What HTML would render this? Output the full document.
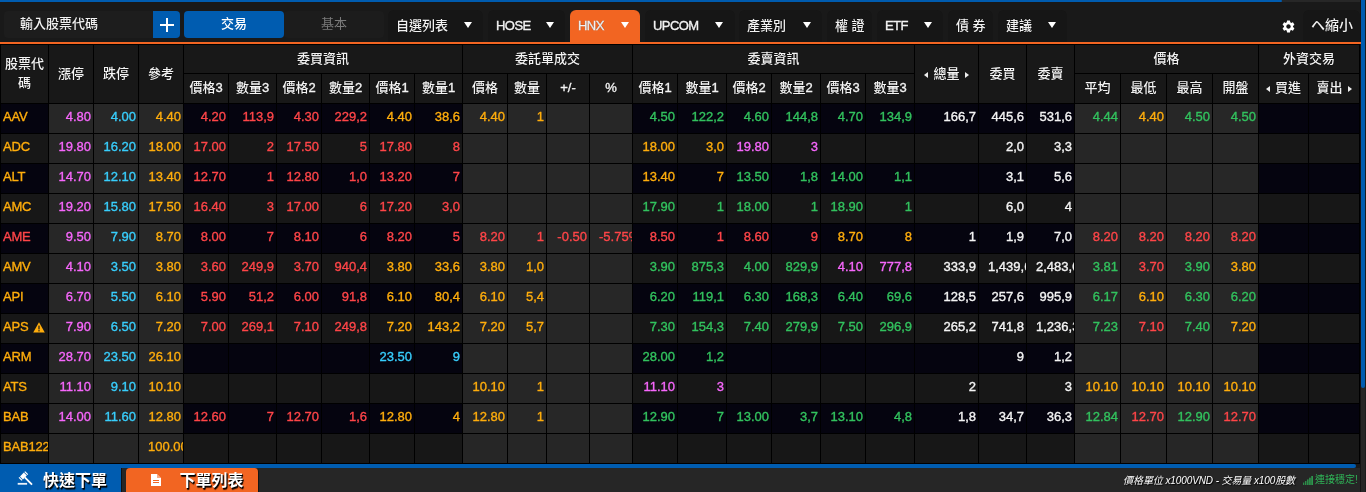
<!DOCTYPE html>
<html lang="zh-Hant"><head><meta charset="utf-8"><title>Price board</title>
<style>
*{box-sizing:border-box}
html,body{margin:0;padding:0}
body{will-change:transform;width:1366px;height:492px;overflow:hidden;background:#191919;position:relative;
 font-family:"Liberation Sans","Noto Sans CJK TC",sans-serif;font-size:13px;color:#f2f2f2}
.abs{position:absolute}
.hs{left:0;top:0;width:1360px;height:2px;background:#272727}
.hs i{display:block;width:1282px;height:2px;background:#005cb0;border-radius:0 1px 1px 0}
.vs{left:1360px;top:0;width:6px;height:492px;background:#262626;border-left:1px solid #141414}
.vs i{position:absolute;left:0;top:0;width:4px;height:388px;background:#005cb0;border-radius:0 0 2px 2px}
.vs b{position:absolute;right:0;top:0;width:1px;height:492px;background:#1c1c1c}
.oline{left:0;top:42px;width:1361px;height:2px;background:#f26522;z-index:3}
.inp{left:4px;top:11px;width:149px;height:27px;background:#1d1d1d;border-radius:4px 0 0 4px;line-height:26px;padding-left:16px;font-weight:500;text-shadow:0 0 1px #000}
.plus{left:153px;top:11px;width:27px;height:27px;background:#005cb0;border-radius:0 4px 4px 0}
.plus:before{content:"";position:absolute;left:7px;top:12.5px;width:14px;height:2px;background:#fff}
.plus:after{content:"";position:absolute;left:13px;top:6.5px;width:2px;height:14px;background:#fff}
.btn{top:11px;height:27px;width:100px;line-height:26px;text-align:center;border-radius:4px;font-weight:500}
.b1{left:184px;background:#005cb0;color:#fff}
.b2{left:284px;background:#1c1c1c;color:#7a7a7a;font-weight:400}
.tab{top:10px;height:32px;background:#161616;border-radius:6px 6px 0 0;line-height:31px;padding-left:8px;font-weight:500;white-space:nowrap;text-shadow:0 0 1px #000}
.tab.on{background:#f26522;height:33px}
.tab em{font-style:normal;letter-spacing:-0.55px;-webkit-text-stroke:0.35px currentColor}
.tab u{position:absolute;top:12px;width:0;height:0;border-left:4.5px solid transparent;border-right:4.5px solid transparent;border-top:6px solid #fff}
.gear{left:1281px;top:19px;width:15px;height:15px}
.mini{left:1303px;top:10px;width:57px;height:32px;background:#161616;border-radius:6px 6px 0 0;line-height:30px;padding-left:8px;font-weight:500;font-size:14px;white-space:nowrap;text-shadow:0 0 1px #000}

.tbl{position:absolute;left:0;top:44px;width:1360px;display:grid;grid-template-rows:29px 30px repeat(12,30px);
 border-left:1px solid #000;border-top:1px solid #000;background:#000}
.tbl>div{border-right:1px solid #000;border-bottom:1px solid #000;overflow:hidden;white-space:nowrap}
.h{background:#181818;display:flex;align-items:center;justify-content:center;text-align:center;font-weight:500;line-height:19px;text-shadow:0 0 1px #000;color:#f4f4f4}
.h span{display:block;position:relative;top:-1px}
.h em{font-style:normal;-webkit-text-stroke:0.35px currentColor}
.h i{display:inline-block;width:0;height:0;border-top:3.5px solid transparent;border-bottom:3.5px solid transparent;vertical-align:middle;position:relative;top:0.5px}
.h i.al{border-right:4px solid #eee;margin-right:5px}
.h i.ar{border-left:4px solid #eee;margin-left:5px}
.c{line-height:26px;text-align:right;padding-right:2px;font-size:13px;-webkit-text-stroke:0.35px currentColor}
.c.s{text-align:left;padding-left:2px;padding-right:0;letter-spacing:-0.2px}
.c.ov{text-align:left;padding-left:9px;padding-right:0}
.od{background:#05040f}
.og{background:#272727}
.ed{background:#171717}
.eg{background:#262626}
.ky{color:#ffad0c}.kp{color:#f767fc}.kc{color:#38cefc}.kr{color:#ff4548}.kg{color:#32c25e}.kw{color:#f4f4f4}
.warn{margin-left:5px;vertical-align:-1.5px}

.hs2{left:0;top:464px;width:1356px;height:4px;background:#005cb0;border-radius:0 2px 2px 0}
.foot{left:0;top:468px;width:1360px;height:24px;background:#262626}
.q1{left:0;top:464px;width:122px;height:28px;background:#005cb0;color:#fff;font-weight:bold;font-size:16px;line-height:33px;padding-left:43px;text-shadow:1px 1px 0 #000,1px 2px 1px rgba(0,0,0,.85);white-space:nowrap}
.q1:after{content:'';position:absolute;right:0;top:4px;width:1px;height:24px;background:#111}
.q2{left:126px;top:468px;width:133px;height:24px;background:#f26522;color:#fff;font-weight:bold;font-size:16px;line-height:26px;padding-left:53.5px;border-radius:4px 4px 0 0;border-right:1px solid #151515;text-shadow:1px 1px 0 #000,1px 2px 1px rgba(0,0,0,.85);white-space:nowrap}
.note{right:71px;top:472.5px;font-size:10px;letter-spacing:-0.1px;font-style:italic;color:#fff;text-shadow:1px 1px 1px #000;white-space:nowrap;line-height:16px}
.conn{left:1315px;top:472px;font-size:10px;color:#2fb457;white-space:nowrap;line-height:16px}

</style></head><body>
<div class="abs hs"><i></i></div>
<div class="abs inp">輸入股票代碼</div>
<div class="abs plus"></div>
<div class="abs btn b1">交易</div>
<div class="abs btn b2">基本</div>
<div class="abs tab" style="left:388px;width:95px">自選列表<u style="left:76px"></u></div>
<div class="abs tab" style="left:488px;width:77px"><em>HOSE</em><u style="left:58px"></u></div>
<div class="abs tab on" style="left:570px;width:70px"><em>HNX</em><u style="left:51px"></u></div>
<div class="abs tab" style="left:645px;width:90px"><em>UPCOM</em><u style="left:70px"></u></div>
<div class="abs tab" style="left:739px;width:83px">產業別<u style="left:64px"></u></div>
<div class="abs tab" style="left:827px;width:45px">權 證</div>
<div class="abs tab" style="left:877px;width:66px"><em>ETF</em><u style="left:47px"></u></div>
<div class="abs tab" style="left:948px;width:45px">債 券</div>
<div class="abs tab" style="left:998px;width:69px">建議<u style="left:50px"></u></div>
<svg class="abs gear" viewBox="0 0 24 24"><path fill="#fff" d="M19.14 12.94c.04-.3.06-.61.06-.94 0-.32-.02-.64-.07-.94l2.03-1.58a.49.49 0 0 0 .12-.61l-1.92-3.32a.488.488 0 0 0-.59-.22l-2.39.96c-.5-.38-1.03-.7-1.62-.94l-.36-2.54a.484.484 0 0 0-.48-.41h-3.84c-.24 0-.43.17-.47.41l-.36 2.54c-.59.24-1.13.57-1.62.94l-2.39-.96c-.22-.08-.47 0-.59.22L2.74 8.87c-.12.21-.08.47.12.61l2.03 1.58c-.05.3-.09.63-.09.94s.02.64.07.94l-2.03 1.58a.49.49 0 0 0-.12.61l1.92 3.32c.12.22.37.29.59.22l2.39-.96c.5.38 1.03.7 1.62.94l.36 2.54c.05.24.24.41.48.41h3.84c.24 0 .44-.17.47-.41l.36-2.54c.59-.24 1.13-.56 1.62-.94l2.39.96c.22.08.47 0 .59-.22l1.92-3.32c.12-.22.07-.47-.12-.61l-2.01-1.58zM12 15.6c-1.98 0-3.600-1.62-3.600-3.600s1.620-3.600 3.600-3.600 3.600 1.620 3.600 3.600-1.620 3.600-3.600 3.600z"/></svg>
<div class="abs mini">ヘ縮小</div>
<div class="abs oline"></div>
<div class="abs vs"><i></i><b></b></div>
<div class="tbl" style="grid-template-columns:48px 45px 45px 45px 45px 48px 45px 48px 45px 48px 45px 39px 43px 43px 45px 49px 45px 49px 45px 49px 64px 48px 48px 46px 46px 46px 46px 50px 51px">
<div class="h two" style="grid-column:1/2;grid-row:1/3"><span>股票代<br>碼</span></div>
<div class="h " style="grid-column:2/3;grid-row:1/3"><span>漲停</span></div>
<div class="h " style="grid-column:3/4;grid-row:1/3"><span>跌停</span></div>
<div class="h " style="grid-column:4/5;grid-row:1/3"><span>參考</span></div>
<div class="h " style="grid-column:5/11;grid-row:1/2"><span>委買資訊</span></div>
<div class="h " style="grid-column:5/6;grid-row:2/3"><span>價格<em>3</em></span></div>
<div class="h " style="grid-column:6/7;grid-row:2/3"><span>數量<em>3</em></span></div>
<div class="h " style="grid-column:7/8;grid-row:2/3"><span>價格<em>2</em></span></div>
<div class="h " style="grid-column:8/9;grid-row:2/3"><span>數量<em>2</em></span></div>
<div class="h " style="grid-column:9/10;grid-row:2/3"><span>價格<em>1</em></span></div>
<div class="h " style="grid-column:10/11;grid-row:2/3"><span>數量<em>1</em></span></div>
<div class="h " style="grid-column:11/15;grid-row:1/2"><span>委託單成交</span></div>
<div class="h " style="grid-column:11/12;grid-row:2/3"><span>價格</span></div>
<div class="h " style="grid-column:12/13;grid-row:2/3"><span>數量</span></div>
<div class="h " style="grid-column:13/14;grid-row:2/3"><span><em>+/-</em></span></div>
<div class="h " style="grid-column:14/15;grid-row:2/3"><span><em>%</em></span></div>
<div class="h " style="grid-column:15/21;grid-row:1/2"><span>委賣資訊</span></div>
<div class="h " style="grid-column:15/16;grid-row:2/3"><span>價格<em>1</em></span></div>
<div class="h " style="grid-column:16/17;grid-row:2/3"><span>數量<em>1</em></span></div>
<div class="h " style="grid-column:17/18;grid-row:2/3"><span>價格<em>2</em></span></div>
<div class="h " style="grid-column:18/19;grid-row:2/3"><span>數量<em>2</em></span></div>
<div class="h " style="grid-column:19/20;grid-row:2/3"><span>價格<em>3</em></span></div>
<div class="h " style="grid-column:20/21;grid-row:2/3"><span>數量<em>3</em></span></div>
<div class="h " style="grid-column:21/22;grid-row:1/3"><span><i class="al"></i>總量<i class="ar"></i></span></div>
<div class="h " style="grid-column:22/23;grid-row:1/3"><span>委買</span></div>
<div class="h " style="grid-column:23/24;grid-row:1/3"><span>委賣</span></div>
<div class="h " style="grid-column:24/28;grid-row:1/2"><span>價格</span></div>
<div class="h " style="grid-column:24/25;grid-row:2/3"><span>平均</span></div>
<div class="h " style="grid-column:25/26;grid-row:2/3"><span>最低</span></div>
<div class="h " style="grid-column:26/27;grid-row:2/3"><span>最高</span></div>
<div class="h " style="grid-column:27/28;grid-row:2/3"><span>開盤</span></div>
<div class="h " style="grid-column:28/30;grid-row:1/2"><span>外資交易</span></div>
<div class="h " style="grid-column:28/29;grid-row:2/3"><span><i class="al"></i>買進</span></div>
<div class="h " style="grid-column:29/30;grid-row:2/3"><span>賣出<i class="ar"></i></span></div>
<div class="c s od ky" style="grid-column:1;grid-row:3">AAV</div><div class="c og kp" style="grid-column:2;grid-row:3">4.80</div><div class="c og kc" style="grid-column:3;grid-row:3">4.00</div><div class="c og ky" style="grid-column:4;grid-row:3">4.40</div><div class="c od kr" style="grid-column:5;grid-row:3">4.20</div><div class="c od kr" style="grid-column:6;grid-row:3">113,9</div><div class="c od kr" style="grid-column:7;grid-row:3">4.30</div><div class="c od kr" style="grid-column:8;grid-row:3">229,2</div><div class="c od ky" style="grid-column:9;grid-row:3">4.40</div><div class="c od ky" style="grid-column:10;grid-row:3">38,6</div><div class="c og ky" style="grid-column:11;grid-row:3">4.40</div><div class="c og ky" style="grid-column:12;grid-row:3">1</div><div class="c og " style="grid-column:13;grid-row:3"></div><div class="c og " style="grid-column:14;grid-row:3"></div><div class="c od kg" style="grid-column:15;grid-row:3">4.50</div><div class="c od kg" style="grid-column:16;grid-row:3">122,2</div><div class="c od kg" style="grid-column:17;grid-row:3">4.60</div><div class="c od kg" style="grid-column:18;grid-row:3">144,8</div><div class="c od kg" style="grid-column:19;grid-row:3">4.70</div><div class="c od kg" style="grid-column:20;grid-row:3">134,9</div><div class="c od kw" style="grid-column:21;grid-row:3">166,7</div><div class="c od kw" style="grid-column:22;grid-row:3">445,6</div><div class="c od kw" style="grid-column:23;grid-row:3">531,6</div><div class="c og kg" style="grid-column:24;grid-row:3">4.44</div><div class="c og ky" style="grid-column:25;grid-row:3">4.40</div><div class="c og kg" style="grid-column:26;grid-row:3">4.50</div><div class="c og kg" style="grid-column:27;grid-row:3">4.50</div><div class="c od " style="grid-column:28;grid-row:3"></div><div class="c od " style="grid-column:29;grid-row:3"></div>
<div class="c s ed ky" style="grid-column:1;grid-row:4">ADC</div><div class="c eg kp" style="grid-column:2;grid-row:4">19.80</div><div class="c eg kc" style="grid-column:3;grid-row:4">16.20</div><div class="c eg ky" style="grid-column:4;grid-row:4">18.00</div><div class="c ed kr" style="grid-column:5;grid-row:4">17.00</div><div class="c ed kr" style="grid-column:6;grid-row:4">2</div><div class="c ed kr" style="grid-column:7;grid-row:4">17.50</div><div class="c ed kr" style="grid-column:8;grid-row:4">5</div><div class="c ed kr" style="grid-column:9;grid-row:4">17.80</div><div class="c ed kr" style="grid-column:10;grid-row:4">8</div><div class="c eg " style="grid-column:11;grid-row:4"></div><div class="c eg " style="grid-column:12;grid-row:4"></div><div class="c eg " style="grid-column:13;grid-row:4"></div><div class="c eg " style="grid-column:14;grid-row:4"></div><div class="c ed ky" style="grid-column:15;grid-row:4">18.00</div><div class="c ed ky" style="grid-column:16;grid-row:4">3,0</div><div class="c ed kp" style="grid-column:17;grid-row:4">19.80</div><div class="c ed kp" style="grid-column:18;grid-row:4">3</div><div class="c ed " style="grid-column:19;grid-row:4"></div><div class="c ed " style="grid-column:20;grid-row:4"></div><div class="c ed " style="grid-column:21;grid-row:4"></div><div class="c ed kw" style="grid-column:22;grid-row:4">2,0</div><div class="c ed kw" style="grid-column:23;grid-row:4">3,3</div><div class="c eg " style="grid-column:24;grid-row:4"></div><div class="c eg " style="grid-column:25;grid-row:4"></div><div class="c eg " style="grid-column:26;grid-row:4"></div><div class="c eg " style="grid-column:27;grid-row:4"></div><div class="c ed " style="grid-column:28;grid-row:4"></div><div class="c ed " style="grid-column:29;grid-row:4"></div>
<div class="c s od ky" style="grid-column:1;grid-row:5">ALT</div><div class="c og kp" style="grid-column:2;grid-row:5">14.70</div><div class="c og kc" style="grid-column:3;grid-row:5">12.10</div><div class="c og ky" style="grid-column:4;grid-row:5">13.40</div><div class="c od kr" style="grid-column:5;grid-row:5">12.70</div><div class="c od kr" style="grid-column:6;grid-row:5">1</div><div class="c od kr" style="grid-column:7;grid-row:5">12.80</div><div class="c od kr" style="grid-column:8;grid-row:5">1,0</div><div class="c od kr" style="grid-column:9;grid-row:5">13.20</div><div class="c od kr" style="grid-column:10;grid-row:5">7</div><div class="c og " style="grid-column:11;grid-row:5"></div><div class="c og " style="grid-column:12;grid-row:5"></div><div class="c og " style="grid-column:13;grid-row:5"></div><div class="c og " style="grid-column:14;grid-row:5"></div><div class="c od ky" style="grid-column:15;grid-row:5">13.40</div><div class="c od ky" style="grid-column:16;grid-row:5">7</div><div class="c od kg" style="grid-column:17;grid-row:5">13.50</div><div class="c od kg" style="grid-column:18;grid-row:5">1,8</div><div class="c od kg" style="grid-column:19;grid-row:5">14.00</div><div class="c od kg" style="grid-column:20;grid-row:5">1,1</div><div class="c od " style="grid-column:21;grid-row:5"></div><div class="c od kw" style="grid-column:22;grid-row:5">3,1</div><div class="c od kw" style="grid-column:23;grid-row:5">5,6</div><div class="c og " style="grid-column:24;grid-row:5"></div><div class="c og " style="grid-column:25;grid-row:5"></div><div class="c og " style="grid-column:26;grid-row:5"></div><div class="c og " style="grid-column:27;grid-row:5"></div><div class="c od " style="grid-column:28;grid-row:5"></div><div class="c od " style="grid-column:29;grid-row:5"></div>
<div class="c s ed ky" style="grid-column:1;grid-row:6">AMC</div><div class="c eg kp" style="grid-column:2;grid-row:6">19.20</div><div class="c eg kc" style="grid-column:3;grid-row:6">15.80</div><div class="c eg ky" style="grid-column:4;grid-row:6">17.50</div><div class="c ed kr" style="grid-column:5;grid-row:6">16.40</div><div class="c ed kr" style="grid-column:6;grid-row:6">3</div><div class="c ed kr" style="grid-column:7;grid-row:6">17.00</div><div class="c ed kr" style="grid-column:8;grid-row:6">6</div><div class="c ed kr" style="grid-column:9;grid-row:6">17.20</div><div class="c ed kr" style="grid-column:10;grid-row:6">3,0</div><div class="c eg " style="grid-column:11;grid-row:6"></div><div class="c eg " style="grid-column:12;grid-row:6"></div><div class="c eg " style="grid-column:13;grid-row:6"></div><div class="c eg " style="grid-column:14;grid-row:6"></div><div class="c ed kg" style="grid-column:15;grid-row:6">17.90</div><div class="c ed kg" style="grid-column:16;grid-row:6">1</div><div class="c ed kg" style="grid-column:17;grid-row:6">18.00</div><div class="c ed kg" style="grid-column:18;grid-row:6">1</div><div class="c ed kg" style="grid-column:19;grid-row:6">18.90</div><div class="c ed kg" style="grid-column:20;grid-row:6">1</div><div class="c ed " style="grid-column:21;grid-row:6"></div><div class="c ed kw" style="grid-column:22;grid-row:6">6,0</div><div class="c ed kw" style="grid-column:23;grid-row:6">4</div><div class="c eg " style="grid-column:24;grid-row:6"></div><div class="c eg " style="grid-column:25;grid-row:6"></div><div class="c eg " style="grid-column:26;grid-row:6"></div><div class="c eg " style="grid-column:27;grid-row:6"></div><div class="c ed " style="grid-column:28;grid-row:6"></div><div class="c ed " style="grid-column:29;grid-row:6"></div>
<div class="c s od kr" style="grid-column:1;grid-row:7">AME</div><div class="c og kp" style="grid-column:2;grid-row:7">9.50</div><div class="c og kc" style="grid-column:3;grid-row:7">7.90</div><div class="c og ky" style="grid-column:4;grid-row:7">8.70</div><div class="c od kr" style="grid-column:5;grid-row:7">8.00</div><div class="c od kr" style="grid-column:6;grid-row:7">7</div><div class="c od kr" style="grid-column:7;grid-row:7">8.10</div><div class="c od kr" style="grid-column:8;grid-row:7">6</div><div class="c od kr" style="grid-column:9;grid-row:7">8.20</div><div class="c od kr" style="grid-column:10;grid-row:7">5</div><div class="c og kr" style="grid-column:11;grid-row:7">8.20</div><div class="c og kr" style="grid-column:12;grid-row:7">1</div><div class="c og kr" style="grid-column:13;grid-row:7">-0.50</div><div class="c og kr ov" style="grid-column:14;grid-row:7">-5.75%</div><div class="c od kr" style="grid-column:15;grid-row:7">8.50</div><div class="c od kr" style="grid-column:16;grid-row:7">1</div><div class="c od kr" style="grid-column:17;grid-row:7">8.60</div><div class="c od kr" style="grid-column:18;grid-row:7">9</div><div class="c od ky" style="grid-column:19;grid-row:7">8.70</div><div class="c od ky" style="grid-column:20;grid-row:7">8</div><div class="c od kw" style="grid-column:21;grid-row:7">1</div><div class="c od kw" style="grid-column:22;grid-row:7">1,9</div><div class="c od kw" style="grid-column:23;grid-row:7">7,0</div><div class="c og kr" style="grid-column:24;grid-row:7">8.20</div><div class="c og kr" style="grid-column:25;grid-row:7">8.20</div><div class="c og kr" style="grid-column:26;grid-row:7">8.20</div><div class="c og kr" style="grid-column:27;grid-row:7">8.20</div><div class="c od " style="grid-column:28;grid-row:7"></div><div class="c od " style="grid-column:29;grid-row:7"></div>
<div class="c s ed ky" style="grid-column:1;grid-row:8">AMV</div><div class="c eg kp" style="grid-column:2;grid-row:8">4.10</div><div class="c eg kc" style="grid-column:3;grid-row:8">3.50</div><div class="c eg ky" style="grid-column:4;grid-row:8">3.80</div><div class="c ed kr" style="grid-column:5;grid-row:8">3.60</div><div class="c ed kr" style="grid-column:6;grid-row:8">249,9</div><div class="c ed kr" style="grid-column:7;grid-row:8">3.70</div><div class="c ed kr" style="grid-column:8;grid-row:8">940,4</div><div class="c ed ky" style="grid-column:9;grid-row:8">3.80</div><div class="c ed ky" style="grid-column:10;grid-row:8">33,6</div><div class="c eg ky" style="grid-column:11;grid-row:8">3.80</div><div class="c eg ky" style="grid-column:12;grid-row:8">1,0</div><div class="c eg " style="grid-column:13;grid-row:8"></div><div class="c eg " style="grid-column:14;grid-row:8"></div><div class="c ed kg" style="grid-column:15;grid-row:8">3.90</div><div class="c ed kg" style="grid-column:16;grid-row:8">875,3</div><div class="c ed kg" style="grid-column:17;grid-row:8">4.00</div><div class="c ed kg" style="grid-column:18;grid-row:8">829,9</div><div class="c ed kp" style="grid-column:19;grid-row:8">4.10</div><div class="c ed kp" style="grid-column:20;grid-row:8">777,8</div><div class="c ed kw" style="grid-column:21;grid-row:8">333,9</div><div class="c ed kw ov" style="grid-column:22;grid-row:8">1,439,6</div><div class="c ed kw ov" style="grid-column:23;grid-row:8">2,483,0</div><div class="c eg kg" style="grid-column:24;grid-row:8">3.81</div><div class="c eg kr" style="grid-column:25;grid-row:8">3.70</div><div class="c eg kg" style="grid-column:26;grid-row:8">3.90</div><div class="c eg ky" style="grid-column:27;grid-row:8">3.80</div><div class="c ed " style="grid-column:28;grid-row:8"></div><div class="c ed " style="grid-column:29;grid-row:8"></div>
<div class="c s od ky" style="grid-column:1;grid-row:9">API</div><div class="c og kp" style="grid-column:2;grid-row:9">6.70</div><div class="c og kc" style="grid-column:3;grid-row:9">5.50</div><div class="c og ky" style="grid-column:4;grid-row:9">6.10</div><div class="c od kr" style="grid-column:5;grid-row:9">5.90</div><div class="c od kr" style="grid-column:6;grid-row:9">51,2</div><div class="c od kr" style="grid-column:7;grid-row:9">6.00</div><div class="c od kr" style="grid-column:8;grid-row:9">91,8</div><div class="c od ky" style="grid-column:9;grid-row:9">6.10</div><div class="c od ky" style="grid-column:10;grid-row:9">80,4</div><div class="c og ky" style="grid-column:11;grid-row:9">6.10</div><div class="c og ky" style="grid-column:12;grid-row:9">5,4</div><div class="c og " style="grid-column:13;grid-row:9"></div><div class="c og " style="grid-column:14;grid-row:9"></div><div class="c od kg" style="grid-column:15;grid-row:9">6.20</div><div class="c od kg" style="grid-column:16;grid-row:9">119,1</div><div class="c od kg" style="grid-column:17;grid-row:9">6.30</div><div class="c od kg" style="grid-column:18;grid-row:9">168,3</div><div class="c od kg" style="grid-column:19;grid-row:9">6.40</div><div class="c od kg" style="grid-column:20;grid-row:9">69,6</div><div class="c od kw" style="grid-column:21;grid-row:9">128,5</div><div class="c od kw" style="grid-column:22;grid-row:9">257,6</div><div class="c od kw" style="grid-column:23;grid-row:9">995,9</div><div class="c og kg" style="grid-column:24;grid-row:9">6.17</div><div class="c og ky" style="grid-column:25;grid-row:9">6.10</div><div class="c og kg" style="grid-column:26;grid-row:9">6.30</div><div class="c og kg" style="grid-column:27;grid-row:9">6.20</div><div class="c od " style="grid-column:28;grid-row:9"></div><div class="c od " style="grid-column:29;grid-row:9"></div>
<div class="c s ed ky" style="grid-column:1;grid-row:10">APS<svg class="warn" viewBox="0 0 12 11" width="12" height="11"><path d="M6 0.3 L11.8 10.6 H0.2 Z" fill="#ffad0c"/><rect x="5.4" y="3.6" width="1.2" height="3.8" fill="#1a1a1a"/><rect x="5.4" y="8.1" width="1.2" height="1.3" fill="#1a1a1a"/></svg></div><div class="c eg kp" style="grid-column:2;grid-row:10">7.90</div><div class="c eg kc" style="grid-column:3;grid-row:10">6.50</div><div class="c eg ky" style="grid-column:4;grid-row:10">7.20</div><div class="c ed kr" style="grid-column:5;grid-row:10">7.00</div><div class="c ed kr" style="grid-column:6;grid-row:10">269,1</div><div class="c ed kr" style="grid-column:7;grid-row:10">7.10</div><div class="c ed kr" style="grid-column:8;grid-row:10">249,8</div><div class="c ed ky" style="grid-column:9;grid-row:10">7.20</div><div class="c ed ky" style="grid-column:10;grid-row:10">143,2</div><div class="c eg ky" style="grid-column:11;grid-row:10">7.20</div><div class="c eg ky" style="grid-column:12;grid-row:10">5,7</div><div class="c eg " style="grid-column:13;grid-row:10"></div><div class="c eg " style="grid-column:14;grid-row:10"></div><div class="c ed kg" style="grid-column:15;grid-row:10">7.30</div><div class="c ed kg" style="grid-column:16;grid-row:10">154,3</div><div class="c ed kg" style="grid-column:17;grid-row:10">7.40</div><div class="c ed kg" style="grid-column:18;grid-row:10">279,9</div><div class="c ed kg" style="grid-column:19;grid-row:10">7.50</div><div class="c ed kg" style="grid-column:20;grid-row:10">296,9</div><div class="c ed kw" style="grid-column:21;grid-row:10">265,2</div><div class="c ed kw" style="grid-column:22;grid-row:10">741,8</div><div class="c ed kw ov" style="grid-column:23;grid-row:10">1,236,3</div><div class="c eg kg" style="grid-column:24;grid-row:10">7.23</div><div class="c eg kr" style="grid-column:25;grid-row:10">7.10</div><div class="c eg kg" style="grid-column:26;grid-row:10">7.40</div><div class="c eg ky" style="grid-column:27;grid-row:10">7.20</div><div class="c ed " style="grid-column:28;grid-row:10"></div><div class="c ed " style="grid-column:29;grid-row:10"></div>
<div class="c s od ky" style="grid-column:1;grid-row:11">ARM</div><div class="c og kp" style="grid-column:2;grid-row:11">28.70</div><div class="c og kc" style="grid-column:3;grid-row:11">23.50</div><div class="c og ky" style="grid-column:4;grid-row:11">26.10</div><div class="c od " style="grid-column:5;grid-row:11"></div><div class="c od " style="grid-column:6;grid-row:11"></div><div class="c od " style="grid-column:7;grid-row:11"></div><div class="c od " style="grid-column:8;grid-row:11"></div><div class="c od kc" style="grid-column:9;grid-row:11">23.50</div><div class="c od kc" style="grid-column:10;grid-row:11">9</div><div class="c og " style="grid-column:11;grid-row:11"></div><div class="c og " style="grid-column:12;grid-row:11"></div><div class="c og " style="grid-column:13;grid-row:11"></div><div class="c og " style="grid-column:14;grid-row:11"></div><div class="c od kg" style="grid-column:15;grid-row:11">28.00</div><div class="c od kg" style="grid-column:16;grid-row:11">1,2</div><div class="c od " style="grid-column:17;grid-row:11"></div><div class="c od " style="grid-column:18;grid-row:11"></div><div class="c od " style="grid-column:19;grid-row:11"></div><div class="c od " style="grid-column:20;grid-row:11"></div><div class="c od " style="grid-column:21;grid-row:11"></div><div class="c od kw" style="grid-column:22;grid-row:11">9</div><div class="c od kw" style="grid-column:23;grid-row:11">1,2</div><div class="c og " style="grid-column:24;grid-row:11"></div><div class="c og " style="grid-column:25;grid-row:11"></div><div class="c og " style="grid-column:26;grid-row:11"></div><div class="c og " style="grid-column:27;grid-row:11"></div><div class="c od " style="grid-column:28;grid-row:11"></div><div class="c od " style="grid-column:29;grid-row:11"></div>
<div class="c s ed ky" style="grid-column:1;grid-row:12">ATS</div><div class="c eg kp" style="grid-column:2;grid-row:12">11.10</div><div class="c eg kc" style="grid-column:3;grid-row:12">9.10</div><div class="c eg ky" style="grid-column:4;grid-row:12">10.10</div><div class="c ed " style="grid-column:5;grid-row:12"></div><div class="c ed " style="grid-column:6;grid-row:12"></div><div class="c ed " style="grid-column:7;grid-row:12"></div><div class="c ed " style="grid-column:8;grid-row:12"></div><div class="c ed " style="grid-column:9;grid-row:12"></div><div class="c ed " style="grid-column:10;grid-row:12"></div><div class="c eg ky" style="grid-column:11;grid-row:12">10.10</div><div class="c eg ky" style="grid-column:12;grid-row:12">1</div><div class="c eg " style="grid-column:13;grid-row:12"></div><div class="c eg " style="grid-column:14;grid-row:12"></div><div class="c ed kp" style="grid-column:15;grid-row:12">11.10</div><div class="c ed kp" style="grid-column:16;grid-row:12">3</div><div class="c ed " style="grid-column:17;grid-row:12"></div><div class="c ed " style="grid-column:18;grid-row:12"></div><div class="c ed " style="grid-column:19;grid-row:12"></div><div class="c ed " style="grid-column:20;grid-row:12"></div><div class="c ed kw" style="grid-column:21;grid-row:12">2</div><div class="c ed " style="grid-column:22;grid-row:12"></div><div class="c ed kw" style="grid-column:23;grid-row:12">3</div><div class="c eg ky" style="grid-column:24;grid-row:12">10.10</div><div class="c eg ky" style="grid-column:25;grid-row:12">10.10</div><div class="c eg ky" style="grid-column:26;grid-row:12">10.10</div><div class="c eg ky" style="grid-column:27;grid-row:12">10.10</div><div class="c ed " style="grid-column:28;grid-row:12"></div><div class="c ed " style="grid-column:29;grid-row:12"></div>
<div class="c s od ky" style="grid-column:1;grid-row:13">BAB</div><div class="c og kp" style="grid-column:2;grid-row:13">14.00</div><div class="c og kc" style="grid-column:3;grid-row:13">11.60</div><div class="c og ky" style="grid-column:4;grid-row:13">12.80</div><div class="c od kr" style="grid-column:5;grid-row:13">12.60</div><div class="c od kr" style="grid-column:6;grid-row:13">7</div><div class="c od kr" style="grid-column:7;grid-row:13">12.70</div><div class="c od kr" style="grid-column:8;grid-row:13">1,6</div><div class="c od ky" style="grid-column:9;grid-row:13">12.80</div><div class="c od ky" style="grid-column:10;grid-row:13">4</div><div class="c og ky" style="grid-column:11;grid-row:13">12.80</div><div class="c og ky" style="grid-column:12;grid-row:13">1</div><div class="c og " style="grid-column:13;grid-row:13"></div><div class="c og " style="grid-column:14;grid-row:13"></div><div class="c od kg" style="grid-column:15;grid-row:13">12.90</div><div class="c od kg" style="grid-column:16;grid-row:13">7</div><div class="c od kg" style="grid-column:17;grid-row:13">13.00</div><div class="c od kg" style="grid-column:18;grid-row:13">3,7</div><div class="c od kg" style="grid-column:19;grid-row:13">13.10</div><div class="c od kg" style="grid-column:20;grid-row:13">4,8</div><div class="c od kw" style="grid-column:21;grid-row:13">1,8</div><div class="c od kw" style="grid-column:22;grid-row:13">34,7</div><div class="c od kw" style="grid-column:23;grid-row:13">36,3</div><div class="c og kg" style="grid-column:24;grid-row:13">12.84</div><div class="c og kr" style="grid-column:25;grid-row:13">12.70</div><div class="c og kg" style="grid-column:26;grid-row:13">12.90</div><div class="c og kr" style="grid-column:27;grid-row:13">12.70</div><div class="c od " style="grid-column:28;grid-row:13"></div><div class="c od " style="grid-column:29;grid-row:13"></div>
<div class="c s ed ky" style="grid-column:1;grid-row:14">BAB122</div><div class="c eg " style="grid-column:2;grid-row:14"></div><div class="c eg " style="grid-column:3;grid-row:14"></div><div class="c eg ky ov" style="grid-column:4;grid-row:14">100.00</div><div class="c ed " style="grid-column:5;grid-row:14"></div><div class="c ed " style="grid-column:6;grid-row:14"></div><div class="c ed " style="grid-column:7;grid-row:14"></div><div class="c ed " style="grid-column:8;grid-row:14"></div><div class="c ed " style="grid-column:9;grid-row:14"></div><div class="c ed " style="grid-column:10;grid-row:14"></div><div class="c eg " style="grid-column:11;grid-row:14"></div><div class="c eg " style="grid-column:12;grid-row:14"></div><div class="c eg " style="grid-column:13;grid-row:14"></div><div class="c eg " style="grid-column:14;grid-row:14"></div><div class="c ed " style="grid-column:15;grid-row:14"></div><div class="c ed " style="grid-column:16;grid-row:14"></div><div class="c ed " style="grid-column:17;grid-row:14"></div><div class="c ed " style="grid-column:18;grid-row:14"></div><div class="c ed " style="grid-column:19;grid-row:14"></div><div class="c ed " style="grid-column:20;grid-row:14"></div><div class="c ed " style="grid-column:21;grid-row:14"></div><div class="c ed " style="grid-column:22;grid-row:14"></div><div class="c ed " style="grid-column:23;grid-row:14"></div><div class="c eg " style="grid-column:24;grid-row:14"></div><div class="c eg " style="grid-column:25;grid-row:14"></div><div class="c eg " style="grid-column:26;grid-row:14"></div><div class="c eg " style="grid-column:27;grid-row:14"></div><div class="c ed " style="grid-column:28;grid-row:14"></div><div class="c ed " style="grid-column:29;grid-row:14"></div>
</div>
<div class="abs foot"></div>
<div class="abs hs2"></div>
<div class="abs q1"><svg class="abs" style="left:14px;top:4px" width="22" height="22" viewBox="0 0 22 22"><g fill="#fff"><rect x="3.7" y="14.9" width="9.4" height="1.8" opacity=".92"/><g transform="translate(9.4,8) rotate(45)"><rect x="-2.1" y="-2.7" width="4.2" height="5.4"/><rect x="-2.1" y="-4.7" width="4.2" height="1.3"/><rect x="-2.1" y="3.4" width="4.2" height="1.3"/><rect x="2" y="-0.9" width="10.2" height="1.8"/></g></g></svg>快速下單</div>
<div class="abs q2"><svg class="abs" style="left:25px;top:6px" width="10" height="12" viewBox="0 0 10 12"><path fill="#fff" d="M0 0H6L10 4V12H0Z"/><path fill="#f26522" d="M6 0V4H10Z" opacity=".55"/><rect x="2" y="6" width="6" height="1" fill="#f26522"/><rect x="2" y="8" width="6" height="1" fill="#f26522"/></svg>下單列表</div>
<div class="abs note">價格單位 x1000VND - 交易量 x100股數</div>
<svg class="abs" style="left:1303px;top:476px" width="10" height="9" viewBox="0 0 10 9"><g fill="#2fb457"><rect x="0" y="6.5" width="1.3" height="2.5" opacity=".7"/><rect x="2.1" y="5" width="1.3" height="4" opacity=".8"/><rect x="4.2" y="3.4" width="1.3" height="5.6" opacity=".9"/><rect x="6.3" y="1.7" width="1.3" height="7.3"/><rect x="8.4" y="0" width="1.4" height="9"/></g></svg>
<div class="abs conn">連接穩定!</div>
</body></html>
